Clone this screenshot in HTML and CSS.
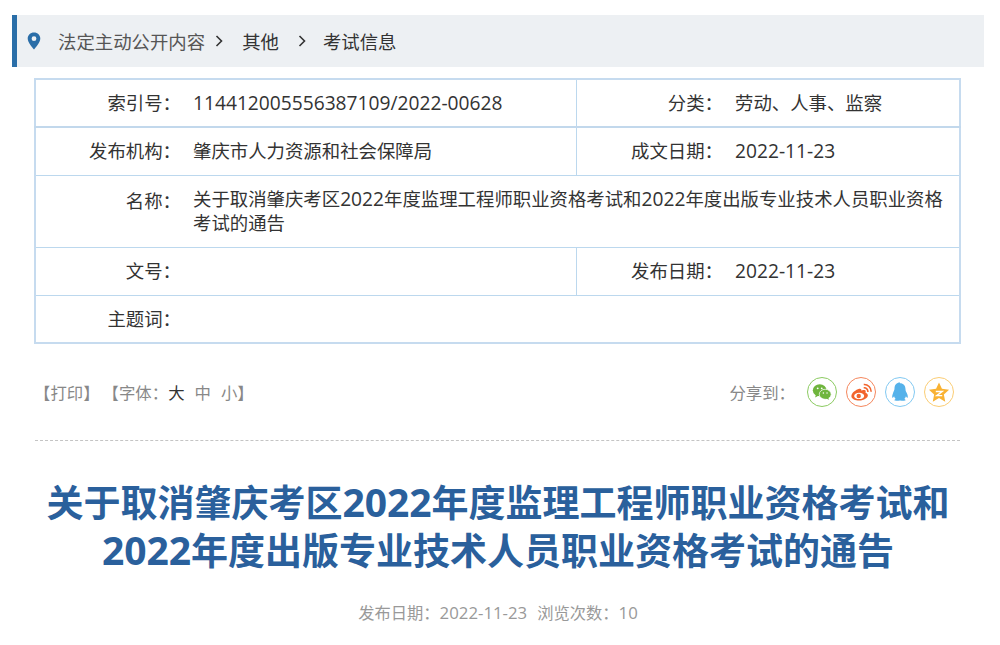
FILE: index.html
```html
<!DOCTYPE html>
<html lang="zh-CN">
<head>
<meta charset="utf-8">
<title>考试信息</title>
<link rel="stylesheet" href="styles.css">
</head>
<body>
<nav class="crumb">
  <svg class="pin" viewBox="0 0 14 18" width="14" height="18"><path fill="#2a6ea8" fill-rule="evenodd" d="M7 0.500C3.300 0.500 0.700 3.200 0.700 6.600 0.700 10.600 5 15 7 17.500 9 15 13.300 10.600 13.300 6.600 13.300 3.200 10.700 0.500 7 0.500ZM7 4.300A2.400 2.400 0 1 1 7 9.100 2.400 2.400 0 0 1 7 4.300Z"/></svg>
  <span class="crumb-first">法定主动公开内容</span>
  <svg class="sep sep-a" viewBox="0 0 8 12" width="8" height="12"><path d="M1.500 1 6.500 6 1.500 11" fill="none" stroke="#333" stroke-width="1.600"/></svg>
  <span>其他</span>
  <svg class="sep sep-b" viewBox="0 0 8 12" width="8" height="12"><path d="M1.500 1 6.500 6 1.500 11" fill="none" stroke="#333" stroke-width="1.600"/></svg>
  <span>考试信息</span>
</nav>
<table class="info">
  <colgroup><col class="c1"><col class="c2"><col class="c3"><col class="c4"></colgroup>
  <tr class="thick"><th>索引号：</th><td><span class="n">114412005556387109/2022-00628</span></td><th class="div">分类：</th><td>劳动、人事、监察</td></tr>
  <tr><th>发布机构：</th><td>肇庆市人力资源和社会保障局</td><th class="div">成文日期：</th><td><span class="n">2022-11-23</span></td></tr>
  <tr class="tall"><th>名称：</th><td colspan="3">关于取消肇庆考区<span class="n">2022</span>年度监理工程师职业资格考试和<span class="n">2022</span>年度出版专业技术人员职业资格考试的通告</td></tr>
  <tr><th>文号：</th><td></td><th class="div">发布日期：</th><td><span class="n">2022-11-23</span></td></tr>
  <tr><th>主题词：</th><td colspan="3"></td></tr>
</table>
<div class="tools">
  <div class="tools-left">
    <span>【打印】</span>
    <span class="font-size">【字体：<b>大</b><i>中</i><i>小</i>】</span>
  </div>
  <div class="share">
    <span class="share-label">分享到：</span>
    <span class="ico wx"><svg viewBox="0 0 24 24" width="24" height="24"><ellipse cx="9.500" cy="10" rx="7.500" ry="6.500" fill="#6fb53d"/><path d="M5.500 14 4.500 18 9 15.500Z" fill="#6fb53d"/><ellipse cx="15.500" cy="14.500" rx="6.500" ry="5.500" fill="#6fb53d" stroke="#fff" stroke-width=".8"/><path d="M18.500 18 20 20.500 16 19Z" fill="#6fb53d"/><circle cx="7.300" cy="8" r="1" fill="#fff"/><circle cx="11.700" cy="8" r="1" fill="#fff"/><circle cx="13.500" cy="13.200" r=".8" fill="#fff"/><circle cx="17.500" cy="13.200" r=".8" fill="#fff"/></svg></span>
    <span class="ico wb"><svg viewBox="0 0 24 24" width="24" height="24"><path d="M10 8.500C6.500 9.500 1.500 13 1.500 16.500c0 3 4.500 4.800 8.500 4.800 5.500 0 9.500-3 9.500-5.800 0-2-2-2.600-2.600-2.800.6-1.500.2-2.600-1.200-2.800-1.300-.2-3 .6-3.300.7.400-1.800-.8-2.500-2.400-2.100Z" fill="#f2642d"/><ellipse cx="10" cy="16.300" rx="5.500" ry="3.400" fill="#fff"/><circle cx="9.500" cy="16.400" r="2.400" fill="#f2642d"/><path d="M15 7.500a4 4 0 0 1 4.500 4.500M15 3.800a7.500 7.500 0 0 1 8 8" fill="none" stroke="#f2642d" stroke-width="1.700"/></svg></span>
    <span class="ico qq"><svg viewBox="0 0 24 24" width="24" height="24"><path d="M12 1.500c-3.800 0-6 3-6 6.300 0 1-.1 1.800-.5 2.600C4.200 13.600 3.200 16 3.500 18c.5.600 1.500-.4 2-1.500.3 1.300 1 2.300 1.800 3-1 .4-1.700 1-1.300 1.600.5.700 3.500.6 6 .1 2.500.5 5.500.6 6-.1.400-.6-.3-1.200-1.300-1.600.8-.7 1.500-1.700 1.800-3 .5 1.100 1.500 2.100 2 1.500.3-2-.7-4.400-2-6.600-.4-.8-.5-1.600-.5-2.600 0-3.300-2.200-6.300-6-6.300Z" fill="#55b2ea"/></svg></span>
    <span class="ico qz"><svg viewBox="0 0 24 24" width="24" height="24"><path d="M12 1.500 15.200 8.500 23 9.500 17.300 14.600 18.800 22.500 12 18.600 5.200 22.500 6.700 14.600 1 9.500 8.800 8.500Z" fill="#f9b233"/><path d="M8.500 11.500h7l-6 4.500h6" fill="none" stroke="#fff" stroke-width="1.500"/></svg></span>
  </div>
</div>
<h1 class="title">关于取消肇庆考区<span class="d">2022</span>年度监理工程师职业资格考试和<br><span class="d">2022</span>年度出版专业技术人员职业资格考试的通告</h1>
<p class="meta">发布日期：<span class="m">2022-11-23</span><span class="views">浏览次数：<span class="m">10</span></span></p>
</body>
</html>
```
FILE: styles.css
```css
* { box-sizing: border-box; }
html, body { margin: 0; padding: 0; height: 645px; overflow: hidden; background: #fff; }
body { font-family: "Noto Sans CJK SC", "Noto Sans", sans-serif; color: #333; padding: 15px 16px 0 12px; }
.crumb { display: flex; align-items: center; height: 52px; background: #edf0f3; border-left: 5px solid #2a6ea8; font-size: 18.4px; color: #333; padding-left: 10px; }
.pin { margin-right: 17px; }
.crumb-first { color: #555; }
.sep-a { margin: 0 19px 0 10px; }
.sep-b { margin: 0 17px 0 19px; }
.info { width: 925px; margin: 11px 0 0 22px; border-collapse: collapse; table-layout: fixed; border: 2px solid #c6dbef; font-size: 18.4px; color: #333; }
.c1 { width: 147px; } .c2 { width: 394px; } .c3 { width: 148px; } .c4 { width: 236px; }
.info tr { height: 48px; }
.info tr.tall { height: 72px; }
.info th, .info td { border-top: 1px solid #bcd8ee; border-bottom: 1px solid #bcd8ee; font-weight: 400; line-height: 24px; padding: 0 0 2px; }
.info tr.thick th, .info tr.thick td { border-bottom: 2px solid #c2d8ec; }
.info th { text-align: right; padding-right: 1px; }
.info td { padding: 0 14px 2px 11px; }
.info th.div { border-left: 1px solid #bcd8ee; }
.info tr.tall th { vertical-align: top; padding-top: 12px; }
.n { font-family: "Open Sans", sans-serif; font-size: 19.2px; line-height: 1; }
.tools { display: flex; justify-content: space-between; align-items: center; height: 97px; margin: 0 24px 0 23px; border-bottom: 1px dashed #c4c4c4; color: #888; font-size: 16.4px; }
.tools-left { display: flex; gap: 3px; margin-left: -1px; }
.font-size b { font-weight: 400; color: #333; margin-right: 10px; }
.font-size i { font-style: normal; margin-right: 10px; }
.font-size i:last-child { margin-right: 0; }
.share { display: flex; align-items: center; gap: 9px; margin-right: 6px; }
.share-label { margin-right: 3px; }
.ico { width: 30px; height: 30px; border-radius: 50%; display: flex; align-items: center; justify-content: center; border: 1px solid; }
.ico svg { width: 22px; height: 22px; }
.wx { border-color: #8ccb62; } .wb { border-color: #f5875d; } .qq { border-color: #82c9f2; } .qz { border-color: #fbcd74; }
.title { margin: 36px 0 0 0; text-align: center; font-size: 37px; line-height: 48px; font-weight: 700; color: #2a609c; }
.d { font-family: "Open Sans", sans-serif; font-size: 39px; line-height: 1; }
.meta { margin: 27px 0 0; text-align: center; font-size: 16.3px; color: #999; line-height: 24px; }
.m { font-family: "Open Sans", sans-serif; font-size: 16.8px; line-height: 1; }
.views { margin-left: 10px; }
```
